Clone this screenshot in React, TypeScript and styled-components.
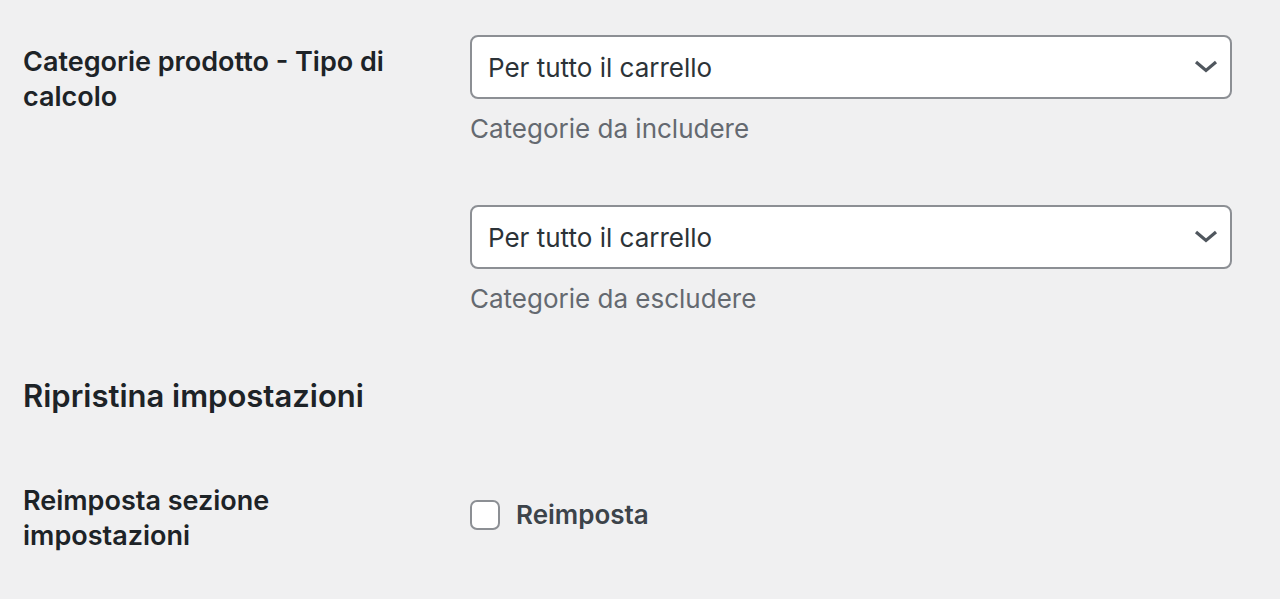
import React from "react";
import styled, { createGlobalStyle } from "styled-components";

const Global = createGlobalStyle`
  html, body { margin: 0; padding: 0; background: #f0f0f1; }
  body { font-family: Inter, "Noto Sans", "Liberation Sans", sans-serif; }
`;

const Page = styled.div`
  width: 1280px;
  height: 599px;
  overflow: hidden;
  box-sizing: border-box;
  padding: 35px 48px 0 23px;
  background: #f0f0f1;
`;

const Row = styled.div<{ $top?: number }>`
  display: grid;
  grid-template-columns: 447px 1fr;
  margin-top: ${(p) => p.$top ?? 0}px;
`;

const Label = styled.div<{ $pad?: number }>`
  padding-top: ${(p) => p.$pad ?? 0}px;
  font-size: 27px;
  line-height: 35px;
  font-weight: 600;
  color: #1d2327;
  width: 380px;
`;

const Field = styled.div`
  display: flex;
  flex-direction: column;
`;

const SelectBox = styled.div<{ $top?: number }>`
  margin-top: ${(p) => p.$top ?? 0}px;
  height: 64px;
  box-sizing: border-box;
  border: 2px solid #8c8f94;
  border-radius: 8px;
  background: #fff;
  display: flex;
  align-items: center;
  justify-content: space-between;
  padding: 0 12px 0 16px;
  font-size: 26px;
  color: #2c3338;
`;

const Description = styled.div`
  margin-top: 13px;
  font-size: 26px;
  line-height: 34px;
  color: #646970;
`;

const Heading = styled.h2`
  margin: 60px 0 0;
  font-size: 31px;
  line-height: 40px;
  font-weight: 600;
  color: #1d2327;
`;

const CheckWrap = styled.label`
  display: flex;
  align-items: center;
  gap: 16px;
  padding-top: 16px;
`;

const Box = styled.span`
  width: 30px;
  height: 30px;
  box-sizing: border-box;
  border: 2px solid #8c8f94;
  border-radius: 7px;
  background: #fff;
`;

const CheckText = styled.span`
  font-size: 26px;
  font-weight: 600;
  color: #3c434a;
`;

const Chevron = () => (
  <svg width="24" height="24" viewBox="0 0 24 24" fill="none">
    <path d="M2 7l10 8.5L22 7" stroke="#50575e" strokeWidth="3.2" />
  </svg>
);

const Select = ({ value, top }: { value: string; top?: number }) => (
  <SelectBox $top={top}>
    <span>{value}</span>
    <Chevron />
  </SelectBox>
);

export default function App() {
  return (
    <Page>
      <Global />
      <Row>
        <Label $pad={9}>Categorie prodotto - Tipo di calcolo</Label>
        <Field>
          <Select value="Per tutto il carrello" />
          <Description>Categorie da includere</Description>
          <Select value="Per tutto il carrello" top={59} />
          <Description>Categorie da escludere</Description>
        </Field>
      </Row>
      <Heading>Ripristina impostazioni</Heading>
      <Row $top={67}>
        <Label>Reimposta sezione impostazioni</Label>
        <Field>
          <CheckWrap>
            <Box />
            <CheckText>Reimposta</CheckText>
          </CheckWrap>
        </Field>
      </Row>
    </Page>
  );
}
